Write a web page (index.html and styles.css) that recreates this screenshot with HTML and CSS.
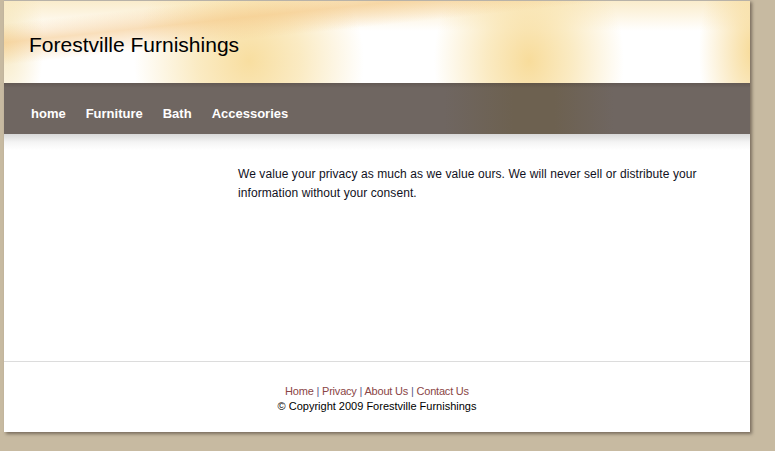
FILE: index.html
```html
<!DOCTYPE html>
<html>
<head>
<meta charset="utf-8">
<title>Forestville Furnishings</title>
<link rel="stylesheet" href="styles.css">
</head>
<body>
<div class="page">
  <div class="header">
    <h1 class="title">Forestville Furnishings</h1>
  </div>
  <div class="nav">
    <a class="nav-link" href="#">home</a>
    <a class="nav-link" href="#">Furniture</a>
    <a class="nav-link" href="#">Bath</a>
    <a class="nav-link" href="#">Accessories</a>
  </div>
  <div class="content">
    <p class="text">We value your privacy as much as we value ours. We will never sell or distribute your information without your consent.</p>
  </div>
  <div class="footer">
    <div class="links"><a href="#">Home</a> <span class="sep">|</span> <a href="#">Privacy</a> <span class="sep">|</span> <a href="#">About Us</a> <span class="sep">|</span> <a href="#">Contact Us</a></div>
    <div class="copy">© Copyright 2009 Forestville Furnishings</div>
  </div>
</div>
</body>
</html>
```
FILE: styles.css
```css
html, body {
  margin: 0;
  padding: 0;
}
body {
  background: #c7baa1;
  font-family: "Liberation Sans", Arial, sans-serif;
  height: 451px;
  overflow: hidden;
}
.page {
  width: 746px;
  margin-left: 4px;
  background: #fff;
  border-top: 1px solid #b8b2a8;
  box-shadow: 2px 2px 3px rgba(60, 50, 40, 0.55);
}
.header {
  height: 82px;
  box-sizing: border-box;
  padding: 32px 0 0 25px;
  background:
    linear-gradient(174deg, rgba(255,255,255,0) 14%, rgba(244, 196, 130, 0.55) 26%, rgba(255,255,255,0) 40%),
    radial-gradient(ellipse 115px 125px at 245px 60px, rgba(248, 222, 160, 1), rgba(249, 228, 175, 0.75) 45%, rgba(255,255,255,0) 100%),
    radial-gradient(ellipse 95px 125px at 525px 60px, rgba(248, 220, 155, 1), rgba(249, 228, 175, 0.75) 45%, rgba(255,255,255,0) 100%),
    radial-gradient(ellipse 55px 110px at 750px 50px, rgba(247, 218, 150, 1), rgba(255,255,255,0) 100%),
    radial-gradient(ellipse 40px 90px at 0px 40px, rgba(246, 230, 185, 0.9), rgba(255,255,255,0) 100%),
    linear-gradient(180deg, #faeccc 0px, #fdf5e3 14px, #ffffff 30px);
}
.title {
  margin: 0;
  font-size: 21px;
  font-weight: normal;
  line-height: 24px;
  color: #000;
}
.nav {
  height: 51px;
  box-sizing: border-box;
  padding: 10px 0 0 27px;
  display: flex;
  align-items: center;
  gap: 20px;
  background:
    linear-gradient(180deg, rgba(60,50,45,0.25) 0px, rgba(60,50,45,0) 5px),
    linear-gradient(90deg, #6f6661 0px, #6f6661 440px, #6d6150 510px, #6d6150 550px, #6f6661 610px, #6f6661 746px);
}
.nav-link {
  color: #fff;
  font-weight: bold;
  font-size: 13px;
  text-decoration: none;
}
.content {
  height: 227px;
  box-sizing: border-box;
  padding: 31px 0 0 234px;
  background: linear-gradient(180deg, #d8d8d8 0px, #f4f4f4 8px, #ffffff 16px);
}
.text {
  margin: 0;
  width: 470px;
  font-size: 12px;
  line-height: 19px;
  letter-spacing: 0.08px;
  color: #111122;
}
.footer {
  height: 71px;
  box-sizing: border-box;
  border-top: 1px solid #dcdcdc;
  padding-top: 22px;
  text-align: center;
  font-size: 11px;
  line-height: 15px;
}
.links {
  letter-spacing: -0.2px;
}
.links a {
  color: #8a4545;
  text-decoration: none;
}
.links .sep {
  color: #5a5a8a;
}
.copy {
  color: #000;
}
```
